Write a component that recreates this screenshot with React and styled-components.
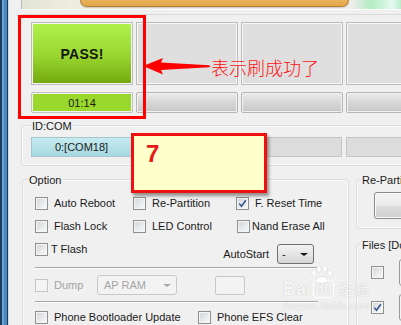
import React from "react";
import styled, { createGlobalStyle } from "styled-components";

const GlobalStyle = createGlobalStyle`
  html, body { margin: 0; padding: 0; background: #f0f0f0; }
  body {
    font-family: "Liberation Sans", Arial, sans-serif;
    font-size: 11px;
    color: #1a1a1a;
  }
  * { box-sizing: border-box; }
`;

const Window = styled.div`
  position: relative;
  display: flex;
  width: 401px;
  height: 325px;
  overflow: hidden;
  background: #f0f0f0;
`;

const Frame = styled.div`
  flex: 0 0 9px;
  background: linear-gradient(
    to right,
    #1f3d5c 0 2px,
    #6aa6d6 2px 4px,
    #4c89bf 4px 7px,
    #1d3b58 7px 8px,
    #cfd8e0 8px 9px
  );
`;

const Main = styled.div`
  flex: 1;
  min-width: 0;
  display: flex;
  flex-direction: column;
  & > * { flex-shrink: 0; }
`;

const BannerRow = styled.div`
  height: 9px;
  padding-left: 12px;
  display: flex;
`;

const Banner = styled.div`
  flex: 1;
  border-left: 1px solid #b9b9b9;
  padding-left: 58px;
  background: linear-gradient(
    to right,
    #e2e5d6 0,
    #efece0 50px,
    #eeeeea 330px,
    #b4ecc4 348px,
    #c9f2d6 360px,
    #e6f9f1 370px,
    #b5ecc6 380px
  );
`;

const OrangeBar = styled.div`
  width: 269px;
  height: 7px;
  background: linear-gradient(#eab45c, #e0a64a);
  border: 1px solid #b8822f;
  border-top: none;
  border-radius: 0 0 7px 7px;
  box-shadow: 0 1px 1px rgba(0, 0, 0, 0.15);
`;

const Divider = styled.div`
  height: 6px;
  margin-left: 12px;
  border-top: 1px solid #fbfbfb;
  border-bottom: 1px solid #d9d9d9;
`;

const Body = styled.div`
  padding-left: 12px;
  display: flex;
  flex-direction: column;
  & > * { flex-shrink: 0; }
`;

const StatusGrid = styled.div`
  margin: 7px 0 0 10px;
  display: grid;
  grid-template-columns: repeat(4, 102px);
  grid-template-rows: 63px 21px;
  column-gap: 3px;
  row-gap: 7px;
`;

const StatusBox = styled.div`
  border: 1px solid #bcbcbc;
  box-shadow: inset 0 0 0 1px #f6f6f6;
  background: ${(p) =>
    p.$pass
      ? "linear-gradient(#b0f24c, #98d52f 55%, #73a80e)"
      : "#dfdfdf"};
  display: flex;
  align-items: center;
  justify-content: center;
  font-size: 14px;
  font-weight: bold;
  color: #151515;
  letter-spacing: 0.3px;
`;

const ProgressBar = styled.div`
  border: 1px solid ${(p) => (p.$done ? "#c2c2c2" : "#b5b5b5")};
  border-radius: 2px;
  box-shadow: inset 0 0 0 1px ${(p) => (p.$done ? "#f4f4f4" : "#f0f0f0")};
  background: ${(p) =>
    p.$done ? "#9ad82e" : "linear-gradient(#ebebeb, #d9d9d9 45%, #c6c6c6)"};
  display: flex;
  align-items: center;
  justify-content: center;
  font-size: 11px;
  color: #1a1a1a;
`;

const GroupBox = styled.div`
  position: relative;
  min-width: 0;
  border: 1px solid #d5dfe5;
  border-radius: 3px;
  box-shadow: inset 0 0 0 1px #fafafa;
`;

const GroupLabel = styled.span`
  position: absolute;
  top: -6px;
  left: ${(p) => p.$left ?? 9}px;
  padding: 0 1px;
  background: #f0f0f0;
  line-height: 13px;
  font-size: 11px;
  color: #1a1a1a;
  white-space: nowrap;
`;

const IdGroup = styled(GroupBox)`
  margin-top: 12px;
  width: 440px;
  padding: 11px 9px 8px;
`;

const IdCells = styled.div`
  display: grid;
  grid-template-columns: repeat(4, 101px);
  grid-template-rows: 20px;
  column-gap: 4px;
`;

const IdCell = styled.div`
  border: 1px solid ${(p) => (p.$active ? "#a4c6cc" : "#c6c6c6")};
  background: ${(p) =>
    p.$active ? "linear-gradient(#c6ebf0, #a6d8e0)" : "#dcdcdc"};
  display: flex;
  align-items: center;
  justify-content: center;
  font-size: 11px;
  color: #1a1a1a;
`;

const BottomRow = styled.div`
  margin-top: 13px;
  display: flex;
  gap: 7px;
`;

const OptionGroup = styled(GroupBox)`
  flex: 0 0 327px;
  margin-left: 1px;
  padding: 15px 30px 0 12px;
  height: 160px;
`;

const OptGrid = styled.div`
  display: grid;
  grid-template-columns: ${(p) => p.$cols};
  height: 16px;
  margin-top: ${(p) => p.$mt ?? 0}px;
`;

const CheckItem = styled.label`
  display: flex;
  align-items: center;
  gap: ${(p) => p.$gap ?? 6}px;
  height: 16px;
  white-space: nowrap;
  color: ${(p) => (p.$disabled ? "#a3a3a3" : "#1a1a1a")};
`;

const Box = styled.span`
  flex: 0 0 13px;
  width: 13px;
  height: 13px;
  border: 1px solid ${(p) => (p.$disabled ? "#c6c6c6" : "#8e8f8f")};
  background: ${(p) =>
    p.$disabled
      ? "#f4f4f4"
      : "linear-gradient(135deg, #d0d3d8 0%, #eceef0 65%, #f8f8f8 100%)"};
  box-shadow: inset 0 0 0 1px ${(p) => (p.$disabled ? "#f4f4f4" : "#f6f6f6")};
  display: flex;
  align-items: center;
  justify-content: center;
`;

const Row3 = styled.div`
  display: flex;
  justify-content: space-between;
  align-items: flex-start;
  height: 24px;
  margin-top: 7px;
  padding-right: 4px;
`;

const AutoStart = styled.div`
  display: flex;
  align-items: center;
  gap: 8px;
  margin-top: 3px;
`;

const Combo = styled.div`
  width: ${(p) => p.$w}px;
  height: 20px;
  border: 1px solid ${(p) => (p.$disabled ? "#c8c8c8" : "#707070")};
  border-radius: 3px;
  background: ${(p) =>
    p.$disabled ? "#f3f3f3" : "linear-gradient(#f3f3f3, #e6e6e6 50%, #d6d6d6)"};
  display: flex;
  align-items: center;
  justify-content: space-between;
  padding: 0 5px 0 ${(p) => p.$pl ?? 4}px;
  color: ${(p) => (p.$disabled ? "#a3a3a3" : "#1a1a1a")};
  font-size: 11px;
`;

const Caret = styled.span`
  width: 0;
  height: 0;
  border-left: ${(p) => p.$s}px solid transparent;
  border-right: ${(p) => p.$s}px solid transparent;
  border-top: ${(p) => p.$s - 1}px solid ${(p) => p.$c};
`;

const Separator = styled.div`
  height: 1px;
  background: #a6a6a6;
  margin-top: ${(p) => p.$mt}px;
  box-shadow: 0 1px 0 #fcfcfc;
`;

const DumpRow = styled.div`
  display: flex;
  align-items: center;
  height: 20px;
  margin-top: 7px;
`;

const DumpCheck = styled.div`
  width: 62px;
`;

const EmptyField = styled.div`
  width: 30px;
  height: 19px;
  margin-left: 38px;
  border: 1px solid #c8c8c8;
  border-radius: 2px;
  background: #f3f3f3;
`;

const RightCol = styled.div`
  flex: 0 0 200px;
  display: flex;
  flex-direction: column;
`;

const RePartGroup = styled(GroupBox)`
  height: 50px;
  padding: 12px 0 0 17px;
`;

const Button = styled.div`
  height: 27px;
  border: 1px solid #8a8a8a;
  border-radius: 3px;
  background: linear-gradient(#f4f4f4, #ebebeb 50%, #dddddd 51%, #cfcfcf);
  box-shadow: inset 0 0 0 1px #fbfbfb;
`;

const FilesGroup = styled(GroupBox)`
  margin-top: 15px;
  height: 100px;
  padding: 14px 0 0 14px;
  display: flex;
  flex-direction: column;
  gap: 8px;
`;

const FileRow = styled.div`
  display: flex;
  align-items: center;
  height: 27px;
  gap: 15px;
`;

const FileField = styled.div`
  flex: 1;
  height: 27px;
  border: 1px solid #9a9a9a;
  border-radius: 3px;
  background: #f4f4f4;
`;

/* ---------- overlays (annotations on top of the screenshot) ---------- */

const RedFrame = styled.div`
  position: absolute;
  left: 18px;
  top: 15px;
  width: 128px;
  height: 104px;
  border: 3px solid #ff0000;
`;

const ArrowSvg = styled.svg`
  position: absolute;
  left: 143px;
  top: 57px;
`;

const Note = styled.div`
  position: absolute;
  left: 211px;
  top: 58px;
  font-family: "Noto Sans CJK SC", sans-serif;
  font-size: 18px;
  line-height: 19px;
  color: #ff1010;
  font-weight: 300;
  white-space: nowrap;
`;

const StickyNote = styled.div`
  position: absolute;
  left: 131px;
  top: 133px;
  width: 136px;
  height: 60px;
  border: 3px solid #f01010;
  background: #ffffcc;
  box-shadow: 2px 3px 3px rgba(0, 0, 0, 0.4);
  padding: 6px 0 0 12px;
  font-size: 24px;
  line-height: 24px;
  font-weight: bold;
  color: #e81818;
`;

const Watermark = styled.div`
  position: absolute;
  left: 283px;
  top: 266px;
  width: 95px;
  color: rgba(255, 255, 255, 0.9);
  text-shadow: 0 0 1px rgba(0, 0, 0, 0.25);
  pointer-events: none;
`;

const WmTop = styled.div`
  display: flex;
  align-items: flex-end;
  gap: 2px;
  height: 32px;
`;

const WmBai = styled.span`
  font-size: 18px;
  font-weight: bold;
  line-height: 18px;
  font-family: "Liberation Sans", Arial, sans-serif;
`;

const WmDu = styled.span`
  font-size: 14px;
  font-weight: bold;
  line-height: 16px;
  border: 1px solid rgba(255, 255, 255, 0.9);
  border-radius: 3px;
  padding: 0 1px;
`;

const WmCn = styled.span`
  font-family: "Noto Sans CJK SC", sans-serif;
  font-size: 15px;
  line-height: 18px;
  margin-left: 3px;
`;

const WmUrl = styled.div`
  font-family: "Liberation Serif", serif;
  font-size: 11px;
  margin-top: 1px;
  letter-spacing: 0.3px;
`;

const Paw = styled.svg`
  position: absolute;
  left: 27px;
  top: 0;
`;

function Check({ checked, disabled, gap, children }) {
  return (
    <CheckItem $gap={gap} $disabled={disabled}>
      <Box $disabled={disabled}>
        {checked && (
          <svg width="9" height="9" viewBox="0 0 9 9">
            <path
              d="M1.3 4.6 L3.5 7.3 L7.8 1.2"
              fill="none"
              stroke="#33508e"
              strokeWidth="1.5"
            />
          </svg>
        )}
      </Box>
      {children && <span>{children}</span>}
    </CheckItem>
  );
}

export default function App() {
  return (
    <>
      <GlobalStyle />
      <Window>
        <Frame />
        <Main>
          <BannerRow>
            <Banner>
              <OrangeBar />
            </Banner>
          </BannerRow>
          <Divider />
          <Body>
            <StatusGrid>
              <StatusBox $pass>PASS!</StatusBox>
              <StatusBox />
              <StatusBox />
              <StatusBox />
              <ProgressBar $done>01:14</ProgressBar>
              <ProgressBar />
              <ProgressBar />
              <ProgressBar />
            </StatusGrid>

            <IdGroup>
              <GroupLabel $left={9}>ID:COM</GroupLabel>
              <IdCells>
                <IdCell $active>0:[COM18]</IdCell>
                <IdCell />
                <IdCell />
                <IdCell />
              </IdCells>
            </IdGroup>

            <BottomRow>
              <OptionGroup>
                <GroupLabel $left={5}>Option</GroupLabel>
                <OptGrid $cols="98px 103px auto">
                  <Check>Auto Reboot</Check>
                  <Check>Re-Partition</Check>
                  <Check checked>F. Reset Time</Check>
                </OptGrid>
                <OptGrid $cols="98px 104px auto" $mt={7}>
                  <Check>Flash Lock</Check>
                  <Check>LED Control</Check>
                  <Check gap={2}>Nand Erase All</Check>
                </OptGrid>
                <Row3>
                  <Check gap={3}>T Flash</Check>
                  <AutoStart>
                    <span>AutoStart</span>
                    <Combo $w={37}>
                      <span>-</span>
                      <Caret $s={4} $c="#111" />
                    </Combo>
                  </AutoStart>
                </Row3>
                <Separator $mt={2} />
                <DumpRow>
                  <DumpCheck>
                    <Check disabled>Dump</Check>
                  </DumpCheck>
                  <Combo $w={80} $disabled $pl={6}>
                    <span>AP RAM</span>
                    <Caret $s={4} $c="#a8a8a8" />
                  </Combo>
                  <EmptyField />
                </DumpRow>
                <Separator $mt={6} />
                <OptGrid $cols="163px auto" $mt={7}>
                  <Check>Phone Bootloader Update</Check>
                  <Check>Phone EFS Clear</Check>
                </OptGrid>
              </OptionGroup>

              <RightCol>
                <RePartGroup>
                  <GroupLabel $left={4}>Re-Partition</GroupLabel>
                  <Button />
                </RePartGroup>
                <FilesGroup>
                  <GroupLabel $left={4}>Files [Download]</GroupLabel>
                  <FileRow>
                    <Check />
                    <FileField />
                  </FileRow>
                  <FileRow>
                    <Check checked />
                    <FileField />
                  </FileRow>
                </FilesGroup>
              </RightCol>
            </BottomRow>
          </Body>
        </Main>

        <RedFrame />
        <ArrowSvg width="68" height="18" viewBox="0 0 68 18">
          <polygon
            points="0,9 20,1 18,5.5 66,8.3 67.5,9.3 66,10.3 18,13 20,17.5"
            fill="#ff0000"
          />
        </ArrowSvg>
        <Note>表示刷成功了</Note>
        <StickyNote>7</StickyNote>

        <Watermark>
          <Paw width="24" height="18" viewBox="0 0 24 18">
            <g fill="rgba(255,255,255,0.9)" stroke="rgba(0,0,0,0.12)" strokeWidth="0.6">
              <ellipse cx="4" cy="7" rx="2.3" ry="3" />
              <ellipse cx="9" cy="3" rx="2.3" ry="3" />
              <ellipse cx="15" cy="3" rx="2.3" ry="3" />
              <ellipse cx="20" cy="7" rx="2.3" ry="3" />
              <path d="M6 15 C7 9, 17 9, 18 15 C17 18, 7 18, 6 15 Z" />
            </g>
          </Paw>
          <WmTop>
            <WmBai>Bai</WmBai>
            <WmDu>du</WmDu>
            <WmCn>经验</WmCn>
          </WmTop>
          <WmUrl>jingyan.baidu.com</WmUrl>
        </Watermark>
      </Window>
    </>
  );
}
